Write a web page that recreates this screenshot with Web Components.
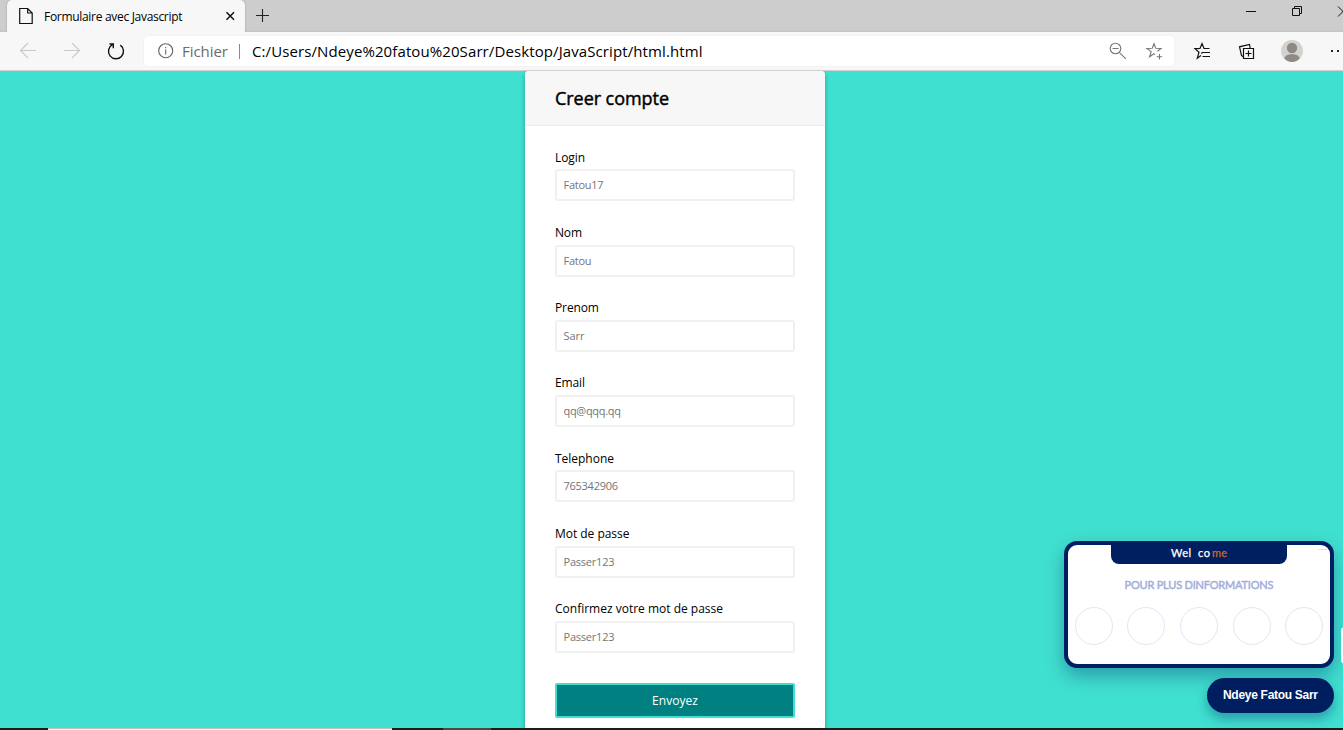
<!DOCTYPE html>
<html lang="fr">
<head>
<meta charset="utf-8">
<title>Formulaire avec Javascript</title>
<style>
html,body{margin:0;height:100%;overflow:hidden}
body{font-family:"Open Sans","Noto Sans",sans-serif;color:#000}
</style>
</head>
<body>
<browser-window>
  <tab-strip slot="tabs">Formulaire avec Javascript</tab-strip>
  <tool-bar slot="tools"></tool-bar>
  <account-card heading="Creer compte">
    <form-field label="Login" hint="Fatou17" lw="30" hw="40"></form-field>
    <form-field label="Nom" hint="Fatou" lw="27" hw="28"></form-field>
    <form-field label="Prenom" hint="Sarr" lw="44" hw="21"></form-field>
    <form-field label="Email" hint="qq@qqq.qq" lw="30" hw="57.5"></form-field>
    <form-field label="Telephone" hint="765342906" lw="59" hw="54.5"></form-field>
    <form-field label="Mot de passe" hint="Passer123" lw="74.5" hw="51"></form-field>
    <form-field label="Confirmez votre mot de passe" hint="Passer123" lw="168" hw="51"></form-field>
    <send-button slot="action">Envoyez</send-button>
  </account-card>
  <welcome-widget slot="overlay"></welcome-widget>
  <task-bar slot="foot"></task-bar>
</browser-window>
<script>
const define = (name, html, setup) => customElements.define(name, class extends HTMLElement {
  constructor() {
    super();
    this.attachShadow({ mode: 'open' });
  }
  connectedCallback() {
    if (this.shadowRoot.childNodes.length) return;
    this.shadowRoot.innerHTML = typeof html === 'function' ? html(this) : html;
    if (setup) setup(this);
  }
});

// Spreads its text over the width given in "w" by adjusting letter spacing.
define('fit-text', `<style>:host{display:inline-block;white-space:pre;flex:none}span{display:inline-block}</style><span><slot></slot></span>`, el => {
  const w = parseFloat(el.getAttribute('w'));
  const span = el.shadowRoot.querySelector('span');
  const n = el.textContent.length;
  const spacing = (w - span.getBoundingClientRect().width) / Math.max(1, n - 1);
  span.style.letterSpacing = spacing.toFixed(3) + 'px';
  el.style.width = w + 'px';
});

define('browser-window', `<style>
:host{display:flex;flex-direction:column;height:730px;width:1343px;overflow:hidden;position:relative;background:#40e0d0}
main{flex:1;min-height:0;display:flex;justify-content:center;padding-left:7px;box-sizing:border-box;overflow:hidden}
</style><slot name="tabs"></slot><slot name="tools"></slot><main><slot></slot></main><slot name="foot"></slot><slot name="overlay"></slot>`);

define('tab-strip', el => `<style>
:host{display:flex;height:32px;background:linear-gradient(#cdcdcd 30px,#c3c3c3);flex:none;padding-left:7px}
.tab{width:238px;height:32px;background:#f7f7f7;border-radius:5px 5px 0 0;display:flex;align-items:center;box-sizing:border-box;padding-left:12px;font-size:12px;box-shadow:0 0 2px #0004}
.tab fit-text{margin-left:11px}
svg{display:block;flex:none}
.x{margin-left:42.5px}
.plus{margin:9px 0 0 11px}
.win{margin:0 0 0 auto}
</style>
<div class="tab">
<svg width="14" height="18" viewBox="0 0 14 18" fill="none" stroke="#111" stroke-width="1.2"><path d="M.7 1.5h8l4.5 4.5v10.5H.7zM8.7 1.5V6h4.5"/></svg>
<fit-text w="138.5">${el.textContent}</fit-text>
<svg class="x" width="10" height="10" viewBox="0 0 10 10" stroke="#111" stroke-width="1.5"><path d="M1.500 1.2l7.500 7.500M9 1.2l-7.500 7.500"/></svg>
</div>
<svg class="plus" width="14" height="14" viewBox="0 0 14 14" stroke="#222" stroke-width="1.1"><path d="M0 6.500h13M6.500 0v13"/></svg>
<svg class="win" width="100" height="24" viewBox="0 0 100 24" fill="none" stroke="#111" stroke-width="1"><path d="M3 11.5h10"/><path d="M49.5 8.500h7v7h-7zM51.500 8.500v-2h7v7h-2"/><path d="M95 6.500l10 10M95 16.500l10-10"/></svg>`);

define('tool-bar', `<style>
:host{display:flex;height:39px;flex:none;background:#f7f7f7;box-sizing:border-box;border-bottom:1px solid #d2d2d2;font-size:15px}
svg{display:block;flex:none}
.nav{width:144px}
.addr{width:1030px;height:30px;margin-top:4px;background:#fff;border-radius:4px;display:flex;align-items:center;box-shadow:0 0 2px #0001;box-sizing:border-box;padding-left:14px}
.info{margin-right:8px}
.kind{color:#6b6b6b}
i{width:1px;height:15px;background:#8a8a8a;margin:0 12px 0 11px}
.end{margin-left:auto}
</style>
<svg class="nav" height="38" viewBox="0 32 144 38" fill="none" stroke="#c9c9c9" stroke-width="1.1">
<path d="M36 50.500H20.500M28 43l-7.500 7.500L28 58M64 50.500h15.500M72 43l7.500 7.500L72 58"/>
<path d="M120.300 45.100A7.500 7.500 0 1 1 112.300 44.700M109.500 44h3.800v4.200" stroke="#111" stroke-width="1.4"/></svg>
<div class="addr">
<svg class="info" width="16" height="16" viewBox="0 0 16 16" fill="none" stroke="#666" stroke-width="1.1"><circle cx="7.700" cy="7.700" r="7"/><path d="M7.700 6.500v5M7.700 4v1.200"/></svg>
<fit-text class="kind" w="46">Fichier</fit-text><i></i>
<fit-text w="450.5">C:/Users/Ndeye%20fatou%20Sarr/Desktop/JavaScript/html.html</fit-text>
<svg class="end" width="70" height="30" viewBox="1104 36 70 30" fill="none" stroke="#777" stroke-width="1.100"><circle cx="1115.500" cy="48.500" r="5.300"/><path d="M1112.500 48.500h6M1119.300 52.300l6.500 6.500"/>
<path d="M1154.800 54.600l-1-.8-4.200 3 1.600-5.200-4.300-3.200 5.300-.1 1.800-4.600 1.800 4.600 5.300.1-3.700 2.900M1159.500 54v5.500M1156.800 56.700h5.400"/></svg>
</div>
<svg width="169" height="38" viewBox="1174 32 169 38" fill="none" stroke="#111" stroke-width="1.200">
<path d="M1201 55.500l-3.700 2.700 1.700-6-4-3.600 5-.1 2-4.900 2 4.900h5.500M1210 52.500h-7.500l-1.300 1M1202.500 56.500h7.500"/>
<path d="M1243.500 48.500h10v10h-10zM1248.500 50.500v6M1245.500 53.500h6M1243.500 57l-2-1.500-2-8.700 10-2.300.6 3.500"/>
<circle cx="1292" cy="51" r="11" fill="#d3d1ce" stroke="none"/><circle cx="1292" cy="48" r="5.200" fill="#8e8985" stroke="none"/><path d="M1284.500 58.500c0-5.800 15-5.800 15 0-3.800 4.600-11.200 4.600-15 0z" fill="#8e8985" stroke="none"/>
<path d="M1331 50h2v2h-2zM1337 50h2v2h-2z" fill="#222" stroke="none"/></svg>`);

define('account-card', el => `<style>
:host{display:block;width:300px;height:670px;background:#fff;border-radius:4px 4px 0 0;box-shadow:0 2px 5px rgba(0,0,0,.3);flex:none}
header{height:55px;box-sizing:border-box;padding:0 30px;background:#f7f7f7;border-bottom:1px solid #ececec;border-radius:4px 4px 0 0;display:flex;align-items:center;font-size:18px;-webkit-text-stroke:.45px #000}
section{padding:23.700px 30px 0}
</style><header><fit-text w="114">${el.getAttribute('heading')}</fit-text></header><section><slot></slot><slot name="action"></slot></section>`);

define('form-field', el => `<style>
:host{display:block;height:75.25px}
label{display:block;height:19.6px;line-height:16px;font-size:12px}
.box{height:32px;box-sizing:border-box;border:2px solid #f0f0f0;border-radius:3px;padding:0 6.500px;display:flex;align-items:center;font-size:11px;line-height:16px;color:#757575}
</style><label><fit-text w="${el.getAttribute('lw')}">${el.getAttribute('label')}</fit-text></label>
<div class="box"><fit-text w="${el.getAttribute('hw')}">${el.getAttribute('hint')}</fit-text></div>`);

define('send-button', el => `<style>
:host{display:flex;justify-content:center;align-items:center;height:35px;box-sizing:border-box;margin-top:6.600px;background:#008080;border:2px solid #40e0d0;border-radius:2px;color:#fff;font-size:12px}
</style><fit-text w="46">${el.textContent}</fit-text>`);

// Contact popup floating above the page, with its launcher pill.
define('welcome-widget', `<style>
:host{position:absolute;right:9px;top:541px;width:270px;display:flex;flex-direction:column;align-items:flex-end}
.panel{width:270px;height:127px;box-sizing:border-box;border:4px solid #001f60;border-radius:13px;background:#fff;box-shadow:0 8px 18px rgba(0,31,96,.35);display:flex;flex-direction:column;align-items:center;position:relative}
.head{width:176px;height:19px;background:#001f60;border-radius:0 0 8px 8px;color:#fff;font-size:11px;display:flex;box-sizing:border-box;padding-left:60px;line-height:16px;font-family:Lato,sans-serif;-webkit-text-stroke:.25px currentColor}
.co{margin-left:7px}.me{margin-left:2px;color:#c8692b}
.more{font:400 11px/14px Lato,sans-serif;-webkit-text-stroke:.45px #a3aedb;color:#a3aedb;margin-top:14px}
.dots{display:flex;gap:14.600px;margin-top:14.600px}
.dots b{width:38px;height:38px;box-sizing:border-box;border:1.500px solid #e3e6f5;border-radius:50%}
.dash{position:absolute;right:3px;top:4px;width:9px;height:1px;background:#e7e7e7}
.pill{width:127px;height:35px;border-radius:18px;background:#001f60;color:#fff;margin-top:10px;display:flex;justify-content:center;align-items:center;font:700 12px/16px "Liberation Sans",sans-serif;box-shadow:0 6px 12px rgba(0,31,96,.35)}
.pill fit-text{margin-top:-2px}
.edge{position:absolute;left:277px;top:86px;width:8px;height:37px;background:#fff;border-radius:4px}
</style>
<div class="panel"><div class="head"><fit-text w="20">Wel</fit-text><fit-text class="co" w="12">co</fit-text><fit-text class="me" w="15">me</fit-text></div>
<fit-text class="more" w="149">POUR PLUS DINFORMATIONS</fit-text>
<div class="dots"><b></b><b></b><b></b><b></b><b></b></div><div class="dash"></div></div>
<div class="pill"><fit-text w="95">Ndeye Fatou Sarr</fit-text></div><div class="edge"></div>`);

define('task-bar', `<style>
:host{display:flex;height:2px;flex:none;background:#1c1c1c;position:relative}
.a{width:344px;margin-left:48px;background:linear-gradient(#c4c0be 50%,#f5f2f0 50%)}
.b{width:48px;margin-left:51px;background:#484848}
</style><div class="a"></div><div class="b"></div>`);
</script>
</body>
</html>
